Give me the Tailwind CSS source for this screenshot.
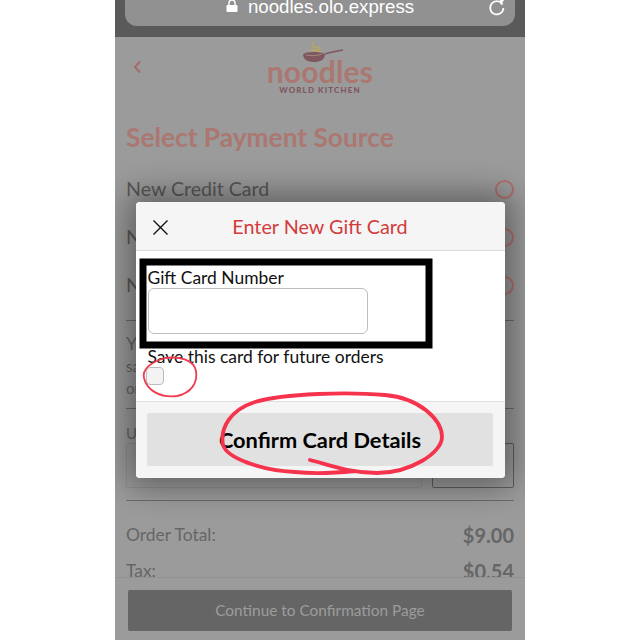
<!DOCTYPE html>
<html>
<head>
<meta charset="utf-8">
<script src="https://cdn.jsdelivr.net/npm/@tailwindcss/browser@4"></script>
</head>
<body class="bg-white">
<div class="relative mx-auto w-[410px] h-[640px] overflow-hidden bg-[#9b9b9b] font-['Lato','Open_Sans',sans-serif]">
  <div class="h-[37px] bg-[#5a5a5a] px-[10px]">
    <div class="h-[26px] rounded-b-[12px] bg-[#919191] relative flex items-start justify-center gap-[10px] text-white">
      <svg class="mt-[-1px]" width="12" height="14" viewBox="0 0 12 14"><path d="M3 7V4a3 3 0 0 1 6 0v3" fill="none" stroke="#fff" stroke-width="1.4"/><rect x="0.5" y="6" width="11" height="7" rx="1" fill="#fff"/></svg>
      <span class="text-[18.7px] leading-[16px] mt-[-1px] font-['Liberation_Sans',sans-serif]">noodles.olo.express</span>
      <svg class="absolute right-[9px] top-[-3px]" width="18" height="20" viewBox="0 0 18 20"><path d="M14.5 7.5 A6.6 6.6 0 1 0 15.4 11" fill="none" stroke="#fff" stroke-width="1.7"/><path d="M11 1 L16 3 L13 8" fill="#fff"/></svg>
    </div>
  </div>

  <div class="relative h-[84px] flex flex-col items-center">
    <svg class="absolute left-[18px] top-[23px]" width="9" height="14" viewBox="0 0 9 14"><path d="M7 1.5 L2 7 L7 12.5" fill="none" stroke="#a96a6a" stroke-width="2"/></svg>
    <svg class="mt-[4px] h-[22px] ml-[4px] shrink-0" width="44" height="22" viewBox="0 0 44 22"><path d="M12 1c5 2-2 3 1 5 4 0 7 0 7 3s-4 3-8 3" fill="none" stroke="#b5a568" stroke-width="1.3"/><path d="M9 10c3-3 11-3 13 1z" fill="#b5a568"/><path d="M3 14c0-2 5-3 11-3s11 1 11 3c-1 5-5 7-11 7S4 19 3 14z" fill="#80565f"/><path d="M6 14c4 1 12 1 16-1" fill="none" stroke="#a08a80" stroke-width="1"/><path d="M25 13c6-2 12-3 18-4" fill="none" stroke="#80565f" stroke-width="1.6"/></svg>
    <div class="text-[30px] leading-[22px] mt-[-3px] font-bold text-[#ab7771] tracking-[0.2px]">noodles</div>
    <div class="text-[8px] leading-[8px] mt-[4px] font-black tracking-[1.1px] text-[#80565f]">WORLD KITCHEN</div>
  </div>

  <div class="px-[11px]">
    <h1 class="text-[26.3px] leading-[32px] font-bold text-[#ab7771]">Select Payment Source</h1>
    <div class="mt-[24px] flex items-center justify-between h-[24px] text-[19.6px] text-[#585858]"><span>New Credit Card</span><span class="w-[19px] h-[19px] rounded-full border-2 border-[#b1716c]"></span></div>
    <div class="mt-[24px] flex items-center justify-between h-[24px] text-[19.6px] text-[#585858]"><span>New Gift Card</span><span class="w-[19px] h-[19px] rounded-full border-2 border-[#b1716c]"></span></div>
    <div class="mt-[24px] flex items-center justify-between h-[24px] text-[19.6px] text-[#585858]"><span>New Card</span><span class="w-[19px] h-[19px] rounded-full border-2 border-[#b1716c]"></span></div>
    <div class="mt-[23px] border-t border-[#6b6b6b] pt-[10px] h-[88px] text-[#666]">
      <div class="text-[18px] leading-[24px]">You</div>
      <div class="text-[15px] leading-[22px]">saved</div>
      <div class="text-[15px] leading-[22px]">on</div>
    </div>
    <div class="border-t border-[#6b6b6b] pt-[14px] text-[15px] leading-[20px] text-[#666]">Use</div>
    <div class="flex gap-[10px] h-[45px]">
      <div class="w-[296px] border border-[#8f8f8f] rounded-[2px]"></div>
      <div class="w-[82px] border border-[#5f5f5f] rounded-[2px]"></div>
    </div>
    <div class="mt-[12px] border-t border-[#6b6b6b] pt-[23px] flex justify-between items-center h-[46px] text-[#666]">
      <span class="text-[17.4px]">Order Total:</span><span class="text-[20px] font-bold">$9.00</span>
    </div>
    <div class="mt-[13px] flex justify-between items-center h-[24px] text-[#666]">
      <span class="text-[17.4px]">Tax:</span><span class="text-[20px] font-bold">$0.54</span>
    </div>
  </div>

  <div class="absolute left-0 right-0 bottom-0 h-[63px] bg-[#9b9b9b] border-t border-[#929292] px-[13px] pt-[12px]">
    <div class="h-[41px] pt-[1px] rounded-[2px] bg-[#656565] flex items-center justify-center text-[15.4px] text-[#9c9c9c]">Continue to Confirmation Page</div>
  </div>

  <div class="absolute left-[20.5px] top-[202px] w-[369px] h-[276px] rounded-[4px] overflow-hidden bg-white flex flex-col shadow-[0_0_32px_8px_rgba(0,0,0,0.4)]">
    <div class="relative h-[49px] pt-[1px] shrink-0 bg-[#f5f5f5] border-b border-[#dcdcdc] flex items-center justify-center text-[19.8px] text-[#d23c3c]">
      <svg class="absolute left-[16px] top-[17px]" width="17" height="17" viewBox="0 0 17 17"><path d="M1.5 1.5 L15.5 15.5 M15.5 1.5 L1.5 15.5" stroke="#111" stroke-width="1.4"/></svg>
      Enter New Gift Card
    </div>
    <div class="h-[150px] shrink-0 px-[12px] pt-[16px] text-[17.45px] text-[#111]">
      <div class="leading-[21px]">Gift Card Number</div>
      <div class="w-[220px] h-[46px] rounded-[6px] border border-[#bdbdbd]"></div>
      <div class="mt-[12px] leading-[22px]">Save this card for future orders</div>
      <div class="ml-[-2px] mt-[-1px] w-[18px] h-[18px] rounded-[4px] border border-[#bdbdbd] bg-[#f3f3f3]"></div>
    </div>
    <div class="flex-1 bg-[#f5f5f5] border-t border-[#e0e0e0] px-[11.5px] pt-[11px]">
      <div class="h-[53px] pt-[1px] rounded-[2px] bg-[#e1e1e1] flex items-center justify-center text-[21.8px] font-bold text-black">Confirm Card Details</div>
    </div>
  </div>

  <svg class="absolute left-0 top-0" width="410" height="640" viewBox="0 0 410 640" fill="none">
    <rect x="28" y="262" width="286" height="83" stroke="#000" stroke-width="7"/>
    <path d="M50 358 C65 356 79 360 81 371 C83 383 76 393 62 396 C46 398 32 391 29 378 C27 369 36 362 50 358" stroke="#f23a50" stroke-width="1.8"/>
    <path d="M195 460 C215 465 235 473 262 473 C295 473 327 453 327 437 C327 420 305 398 270 395 C235 392 170 393 140 402 C115 410 105 428 108 445 C112 458 145 470 180 472 C200 474 220 473 240 471" stroke="#f5334c" stroke-width="3.8" stroke-linecap="round"/>
  </svg>
</div>
</body>
</html>
